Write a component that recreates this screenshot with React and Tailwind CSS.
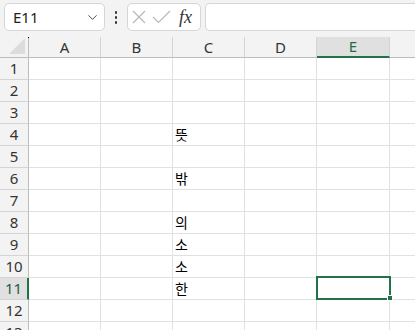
import { ChevronDown } from 'lucide-react';

const cols = ['A', 'B', 'C', 'D', 'E'];
const values = { 4: '뜻', 6: '밖', 8: '의', 9: '소', 10: '소', 11: '한' };
const rows = Array.from({ length: 13 }, (_, i) => i + 1);

export default function App() {
  return (
    <div className="w-[415px] h-[330px] overflow-hidden bg-[#f3f3f3] text-[#222]" style={{ fontFamily: '"Noto Sans", "Noto Sans CJK KR", sans-serif' }}>
      {/* formula bar */}
      <div className="flex items-start h-[37px] pt-[3px] pl-[4px]">
        <div className="flex items-center justify-between w-[101px] h-[28px] bg-white border border-[#d6d6d6] rounded-[5px] pl-[8px] pr-[4px]">
          <span className="text-[15px] leading-none">E11</span>
          <ChevronDown size={15} strokeWidth={1.5} className="text-[#444]" />
        </div>
        <div className="flex flex-col gap-[2.5px] w-[22px] items-center pt-[8px]">
          <span className="w-[2.5px] h-[2.5px] bg-[#333] rounded-full" />
          <span className="w-[2.5px] h-[2.5px] bg-[#333] rounded-full" />
          <span className="w-[2.5px] h-[2.5px] bg-[#333] rounded-full" />
        </div>
        <div className="flex items-center w-[74px] h-[28px] bg-white border border-[#d6d6d6] rounded-[5px] pl-[4px] gap-[6px]">
          <svg width="14" height="14" viewBox="0 0 14 14" className="text-[#b8b8b8]">
            <path d="M1 1 L13 13 M13 1 L1 13" stroke="currentColor" strokeWidth="1.2" fill="none" />
          </svg>
          <svg width="19" height="14" viewBox="0 0 19 14" className="text-[#b8b8b8]">
            <path d="M1 7 L6.5 12.5 L18 1" stroke="currentColor" strokeWidth="1.2" fill="none" />
          </svg>
          <span className="italic text-[18px] leading-none text-[#333] ml-[2px]" style={{ fontFamily: '"Liberation Serif", serif' }}>fx</span>
        </div>
        <div className="flex-1 ml-[4px] h-[28px] bg-white border border-[#d6d6d6] border-r-0 rounded-l-[5px]" />
      </div>

      {/* sheet */}
      <div className="relative">
        <div className="grid grid-cols-[29px_72px_72px_72px_72px_73px_1fr] grid-rows-[21px] auto-rows-[22px]">
          {/* header row */}
          <div className="relative border-b border-r border-[#bdbdbd] bg-[#f3f3f3]">
            <div className="absolute right-[3px] bottom-[3px] w-0 h-0 border-l-[16px] border-l-transparent border-b-[16px] border-b-[#dcdcdc]" />
            <div className="absolute right-[-1px] top-0 w-[1px] h-[1px] bg-black" />
          </div>
          {cols.map((c) => (
            <div
              key={c}
              className={`flex items-center justify-center text-[15px] border-r border-[#d4d4d4] ${c === 'E' ? 'bg-[#e0e0e0] text-[#1e6e45] border-b-2 border-b-[#217346]' : 'bg-[#f3f3f3] text-[#333] border-b border-b-[#bdbdbd]'}`}
            >
              {c}
            </div>
          ))}
          <div className="bg-[#f3f3f3] border-b border-[#bdbdbd]" />

          {rows.map((r) => (
            <div key={r} className="contents">
              <div
                className={`flex items-center justify-center text-[15px] border-b border-[#d4d4d4] ${r === 11 ? 'bg-[#e0e0e0] text-[#1e5e40] border-r-2 border-r-[#217346]' : 'bg-[#f3f3f3] text-[#333] border-r border-r-[#bdbdbd]'}`}
              >
                {r}
              </div>
              {cols.map((c) => (
                <div key={c} className="flex items-center pl-[2px] bg-white border-r border-b border-[#e1e1e1] text-[14px] text-black">
                  {c === 'C' && values[r] ? values[r] : ''}
                </div>
              ))}
              <div className="bg-white border-b border-[#e1e1e1]" />
            </div>
          ))}
        </div>

        {/* selection */}
        <div className="absolute left-[316px] top-[239px] w-[75px] h-[24px] border-2 border-[#217346]" />
        <div className="absolute left-[387px] top-[258px] w-[6px] h-[6px] bg-[#217346] border border-white" />
      </div>
    </div>
  );
}
